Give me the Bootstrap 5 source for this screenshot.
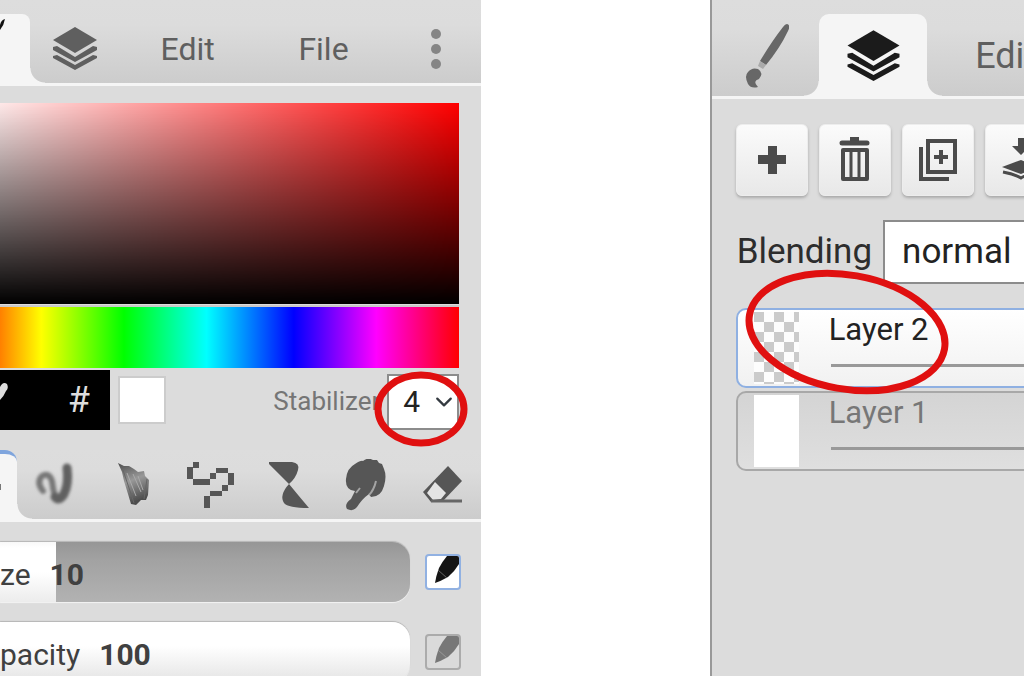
<!DOCTYPE html>
<html lang="en">
<head>
<meta charset="utf-8">
<meta name="viewport" content="width=device-width, initial-scale=1">
<title>Paint panels</title>
<link href="https://cdn.jsdelivr.net/npm/bootstrap@5.3.0/dist/css/bootstrap.min.css" rel="stylesheet">
<style>
  :root { --panel: #dcdcdc; --lit: #f5f5f5; --ink: #5f5f5f; --ring: #e01010; }
  body { font-family: Roboto, "Liberation Sans", sans-serif; background: #fff; }
  .panel { background: var(--panel); line-height: 1; }
  .brush-panel { width: 47%; }
  .layer-panel { width: 31%; flex: 0 0 30.7%; border-left: 2px solid #999; }
  .plain { border: 0; background: none; padding: 0; color: var(--ink); line-height: 1; }
  .tabs { background: linear-gradient(#dddddd, #dcdcdc 30%, #cccccc); border-bottom: 3px solid var(--lit); }
  .tabs-main { height: 86px; font-size: 32px; }
  .tabs-main .plain:not(.tab-on) { padding-top: 14px; }
  .tabs-layer { height: 99px; font-size: 36px; }
  .tabs-tools { height: 72px; margin-top: 20px; }
  .tab-on { position: relative; background: var(--lit); border-radius: 0 8px 0 0; }
  .tab-on::after, .tab-mid::before { content: ""; position: absolute; bottom: 0; left: 100%; width: 15px; height: 15px;
    background: radial-gradient(circle at 100% 0, transparent 14px, var(--lit) 15px); }
  .tab-mid { border-radius: 10px 10px 0 0; margin-top: 14px; }
  .tab-mid::before { left: auto; right: 100%; background: radial-gradient(circle at 0 0, transparent 14px, var(--lit) 15px); }
  .tab-blue { border-top: 4px solid #7fa5dd; border-radius: 0 12px 0 0; }
  .g30 { flex: 30 1 0; margin-top: 14px; } .g90 { flex: 90 1 0; } .g136 { flex: 136 1 0; }
  .w-tab { flex: 0 0 34.5%; }
  .picker { padding: 17px 22px 0 0; }
  .shade { height: 201px; background: linear-gradient(transparent, #000), linear-gradient(90deg, #ffe9e9, #f00); }
  .hue { height: 61px; margin-top: 3px; background: linear-gradient(90deg, #ff8000, #ff0 9%, #0f0 27%, #0ff 45%, #00f 64%, #f0f 82%, #f00); box-shadow: 0 -2px #c9c9c9; }
  .swatches { height: 62px; padding-top: 2px; }
  .current { width: 110px; background: #000; color: #ddd; font-size: 36px; }
  .second { width: 48px; height: 48px; margin: 6px 0 0 8px; background: #fff; border: 2px solid #ccc; }
  .stab-label { font-size: 26px; color: #757575; padding-top: 18px; margin-right: 7px; }
  .stab { width: 72px; height: 56px; margin-top: 4px; }
  .stab select { height: 56px; border: 2px solid #8c8c8c; border-radius: 0; color: #222; font-size: 30px; padding: 0 0 2px 14px; background-position: right 4px center; background-size: 18px; }
  .note { position: absolute; pointer-events: none; fill: none; stroke: var(--ring); stroke-width: 7; z-index: 3; }
  .note-stab { left: -13px; top: -4px; }
  .note-layer { left: 6px; top: -43px; }
  .sliders { padding: 20px 20px 0 0; font-size: 30px; color: #404040; gap: 20px; }
  .track { height: 60px; border-radius: 0 18px 18px 0; box-shadow: 0 1px 1px #f3f3f3, 0 -1px 1px #b5b5b5; gap: 19px; padding-top: 5px; }
  .track-size { background: linear-gradient(#f8f8f8, #fff 10%, #fff 50%, #ececec) 0 0 / 56px 100% no-repeat, linear-gradient(#969696, #a2a2a2 30%, #b2b2b2); }
  .track-full { background: linear-gradient(#fff 40%, #e4e4e4); }
  .pen { width: 36px; height: 36px; margin-left: 15px; border: 2px solid #ababab; border-radius: 4px; color: #777; background: #dadada; overflow: hidden; }
  .pen.active { border-color: #91b1e2; background: #fff; color: #151515; }
  .actions { padding: 25px 0 0 24px; gap: 11px; }
  .tool { flex: 0 0 72px; height: 72px; border-radius: 6px; border: 1px solid #ededed; background: linear-gradient(#fbfbfb, #e8e8e8); box-shadow: 0 2px 3px #aaa; color: #4b4b4b; }
  .blend { padding: 24px 0 0 25px; font-size: 35px; color: #2d2d2d; }
  .blend label { padding-bottom: 2px; }
  .blend select { min-width: 200px; height: 64px; margin-left: 11px; border: 2px solid #8c8c8c; border-radius: 0; font-size: 35px; color: #222; padding: 0 40px 0 17px; }
  .layers { padding: 24px 0 0 24px; gap: 3px; }
  .layer { height: 80px; min-width: 340px; border: 2px solid #a8a8a8; border-radius: 10px; background: linear-gradient(#d4d4d4, #dfdfdf); color: #777; font-size: 31px; }
  .layer.active { border-color: #8fb0e2; background: linear-gradient(#fff, #f1f1f1); color: #222; }
  .thumb { width: 45px; height: 72px; margin: 2px 30px 0 16px; background: #fff; }
  .thumb-clear { background: conic-gradient(#cbcbcb 25%, #fdfdfd 0 50%, #cbcbcb 0 75%, #fdfdfd 0) -10px 0 / 20px 20px; }
  .layer-name { padding-top: 4px; }
  .alpha { appearance: none; height: 3px; margin: 19px 0 0 2px; background: #999; }
  .alpha::-webkit-slider-thumb { appearance: none; width: 1px; height: 3px; }
</style>
</head>
<body>
<main class="d-flex justify-content-between vh-100 overflow-hidden">

  <section class="panel brush-panel overflow-hidden" aria-label="Brush">
    <nav class="tabs tabs-main d-flex">
      <button class="plain tab-on g30 text-start" aria-label="Brush tab"><svg class="d-block mb-5" width="8" height="18" viewBox="0 0 8 18"><path d="M0 9Q1 4 5 3Q4 9 0 14Z" fill="#111"/></svg></button>
      <button class="plain g90" aria-label="Layers"><svg width="46" height="44" viewBox="0 0 46 44" fill="currentColor"><path d="M23 0 45 13 23 26 1 13Z"/><path d="M1 23 1 20 5 19 23 30 41 19 45 20V23L23 35Z"/><path d="M1 31V29L5 28 23 38 41 28 45 29V31L23 43Z"/></svg></button>
      <button class="plain g136">Edit</button>
      <button class="plain g136">File</button>
      <button class="plain g90" aria-label="More"><svg width="12" height="42" viewBox="0 0 12 42" fill="#858585"><circle cx="6" cy="6" r="5"/><circle cx="6" cy="21" r="5"/><circle cx="6" cy="36" r="5"/></svg></button>
    </nav>

    <div class="picker">
      <div class="shade"></div>
      <div class="hue"></div>
      <div class="swatches d-flex">
        <div class="current d-flex align-items-center justify-content-between">
          <svg width="10" height="40" viewBox="0 0 10 40"><path d="M0 7Q3 1 7 4Q9 8 6 11Q4 16 0 20Z" fill="#ddd"/></svg>
          <span class="pe-3 me-1">#</span>
        </div>
        <div class="second"></div>
        <label class="stab-label ms-auto" for="stab">Stabilizer</label>
        <div class="stab position-relative">
          <select class="form-select" id="stab"><option>4</option></select>
          <svg class="note note-stab" width="94" height="78" viewBox="0 0 94 78"><ellipse cx="47" cy="39" rx="43" ry="34"/></svg>
        </div>
      </div>
    </div>

    <nav class="tabs tabs-tools d-flex" aria-label="Brush type">
      <button class="plain tab-on tab-blue pe-3 text-start" aria-label="Pen"><svg width="1" height="12" viewBox="0 0 1 12"><path d="M0 3H1V9H0Z" fill="#777"/></svg></button>
      <button class="plain g90" aria-label="Blend"><svg width="48" height="52" viewBox="32 459 48 52" fill="none" stroke-linecap="round" stroke-linejoin="round"><defs><filter id="soft" filterUnits="userSpaceOnUse" x="30" y="455" width="54" height="60"><feGaussianBlur stdDeviation="1.5"/></filter></defs><g filter="url(#soft)"><path d="M43 491Q36 482 42 476Q49 472 52 481Q53 490 55 496" stroke="#777" stroke-width="6"/><path d="M55 497Q59 502 64 494Q69 484 67 468" stroke="#606060" stroke-width="9"/></g></svg></button>
      <button class="plain g90" aria-label="Sketchy"><svg width="48" height="52" viewBox="109 459 48 52"><defs><linearGradient id="bristle" x1="0" y1="0" x2=".3" y2="1"><stop stop-color="#4d4d4d"/><stop offset=".5" stop-color="#989898"/><stop offset="1" stop-color="#4d4d4d"/></linearGradient><filter id="soft2"><feGaussianBlur stdDeviation=".7"/></filter></defs><g filter="url(#soft2)"><path d="M118 463 124 466 129 466 134 469 138 472 144 471 145 476 149 480 148 495 146 500 141 500 136 505 131 504 128 494 124 481 122 472Z" fill="url(#bristle)"/><path d="M127 473 136 496M133 474 141 492M138 476 143 490" stroke="#aaa" stroke-width="1"/><path d="M123 470 134 503M147 479 144 499" stroke="#666"/></g></svg></button>
      <button class="plain g90" aria-label="Pixel"><svg width="48" height="52" viewBox="186 459 48 52" fill="#565656" shape-rendering="crispEdges"><path d="M193 462h6v6h-6zM187 467h6v12h-6zM193 479h17v6h-17zM210 473h6v6h-6zM216 468h12v5h-12zM228 473h6v12h-6zM222 485h6v6h-6zM210 491h12v5h-12zM204 496h6v12h-6z"/></svg></button>
      <button class="plain g90" aria-label="Lagrange"><svg width="48" height="52" viewBox="263 459 48 52" fill="#565656"><path d="M268 462H291Q299 463 297 470Q295 478 288 484Q280 476 268 464Z"/><path d="M288 484Q297 495 308 508Q287 508 283 503Q278 495 288 484Z"/></svg></button>
      <button class="plain g90" aria-label="Smudge"><svg width="48" height="52" viewBox="341 459 48 52"><path d="M355 491Q345 490 346 479Q347 468 355 464Q361 460 363 461Q368 457 373 460L377 460 379 463 382 464 384 469Q387 476 384 486Q381 497 371 497L369 494Q362 499 357 507Q353 512 347 509Q344 504 351 499Z" fill="#565656"/><path d="M376 481Q374 490 369 495M360 488 356 493" stroke="#a4a4a4" stroke-width="2" fill="none"/></svg></button>
      <button class="plain g90" aria-label="Eraser"><svg width="48" height="52" viewBox="419 459 48 52"><path d="M448 466 462 481 442 502H431L423 492Z" fill="#565656"/><path d="M435 482 446 493 441 499 433 500 427 493Z" fill="#e4e4e4"/><path d="M431 501H462" stroke="#666" stroke-width="3"/></svg></button>
    </nav>

    <div class="sliders d-flex flex-column">
      <div class="d-flex align-items-center">
        <div class="track track-size flex-grow-1 d-flex align-items-center"><span>ze</span><b>10</b></div>
        <button class="plain pen active" aria-label="Pressure controls size" aria-pressed="true"><svg class="d-block" width="32" height="32" viewBox="0 0 32 32" fill="currentColor"><path d="M20 0H32V8Q28 15 21 21Q14 25 8 27Q9 20 12 12Q15 6 20 0Z"/><path d="M11 14 20 22" stroke="#666" stroke-width="1"/></svg></button>
      </div>
      <div class="d-flex align-items-center">
        <div class="track track-full flex-grow-1 d-flex align-items-center"><span>pacity</span><b>100</b></div>
        <button class="plain pen" aria-label="Pressure controls opacity" aria-pressed="false"><svg class="d-block" width="32" height="32" viewBox="0 0 32 32" fill="currentColor"><path d="M20 0H32V8Q28 15 21 21Q14 25 8 27Q9 20 12 12Q15 6 20 0Z"/><path d="M11 14 20 22" stroke="#999" stroke-width="1"/></svg></button>
      </div>
    </div>
  </section>

  <section class="panel layer-panel overflow-hidden" aria-label="Layers">
    <nav class="tabs tabs-layer d-flex">
      <button class="plain w-tab pt-3" aria-label="Brush"><svg width="46" height="66" viewBox="-2 0 46 66"><path d="M42 1Q46 2 43 8Q35 25 21 42L15 38Q27 18 38 4Q40 1 42 1Z" fill="#676767"/><path d="M15 38 21 42 18 46 13 43Z" fill="#aaa"/><path d="M13 46Q19 50 14 56Q7 58 13 64Q6 66 3 61Q-1 53 3 49Q7 44 13 46Z" fill="#676767"/></svg></button>
      <button class="plain w-tab tab-on tab-mid" aria-label="Layers"><svg width="55" height="52" viewBox="0 -1 46 44" fill="#1b1b1b"><path d="M23 0 45 13 23 26 1 13Z"/><path d="M1 23 1 20 5 19 23 30 41 19 45 20V23L23 35Z"/><path d="M1 31V29L5 28 23 38 41 28 45 29V31L23 43Z"/></svg></button>
      <button class="plain ps-5 pt-3">Edit</button>
    </nav>

    <div class="actions d-flex">
      <button class="tool p-0" aria-label="Add layer"><svg width="28" height="28" viewBox="0 0 28 28" fill="currentColor"><path d="M10 0h9v9h9v9h-9v10h-9V18H0V9h10z"/></svg></button>
      <button class="tool p-0" aria-label="Delete layer"><svg width="32" height="46" viewBox="0 0 32 46" fill="none" stroke="currentColor"><path d="M11 2H20" stroke-width="4"/><path d="M3 6H28" stroke-width="5" stroke-linecap="round"/><path d="M4 13H28V42H4Z" stroke-width="4" stroke-linejoin="round"/><path d="M12 12V42M20 12V42" stroke-width="3"/></svg></button>
      <button class="tool p-0" aria-label="Duplicate layer"><svg width="40" height="44" viewBox="0 0 40 44" fill="none" stroke="currentColor"><path d="M10 3H37V34H10Z" stroke-width="4"/><path d="M3 9V41H31" stroke-width="4"/><path d="M23 12V26M16 19H30" stroke-width="4"/></svg></button>
      <button class="tool p-0" aria-label="Merge down"><svg width="40" height="44" viewBox="0 0 40 44" fill="currentColor"><path d="M17 0h6v8h6l-9 9-9-9h6z"/><path d="M20 22 38 29 20 36 1 29Z"/><path d="M2 34Q13 36 20 40Q27 36 38 34" fill="none" stroke="currentColor" stroke-width="3"/></svg></button>
    </div>

    <div class="blend d-flex align-items-center">
      <label for="mode">Blending</label>
      <select class="form-select flex-shrink-0 w-auto" id="mode"><option>normal</option></select>
    </div>

    <div class="layers d-flex flex-column">
      <div class="layer active d-flex position-relative">
        <div class="thumb thumb-clear flex-shrink-0"></div>
        <div class="flex-grow-1 d-flex flex-column">
          <label class="layer-name" for="alpha2">Layer 2</label>
          <input class="alpha" type="range" id="alpha2" value="100">
        </div>
        <svg class="note note-layer" width="208" height="130" viewBox="-2 -2 208 130"><ellipse cx="101" cy="63" rx="99" ry="57" transform="rotate(10 101 63)"/></svg>
      </div>
      <div class="layer d-flex">
        <div class="thumb flex-shrink-0"></div>
        <div class="flex-grow-1 d-flex flex-column">
          <label class="layer-name" for="alpha1">Layer 1</label>
          <input class="alpha" type="range" id="alpha1" value="100">
        </div>
      </div>
    </div>
  </section>
</main>
<script src="https://cdn.jsdelivr.net/npm/bootstrap@5.3.0/dist/js/bootstrap.bundle.min.js"></script>
</body>
</html>
